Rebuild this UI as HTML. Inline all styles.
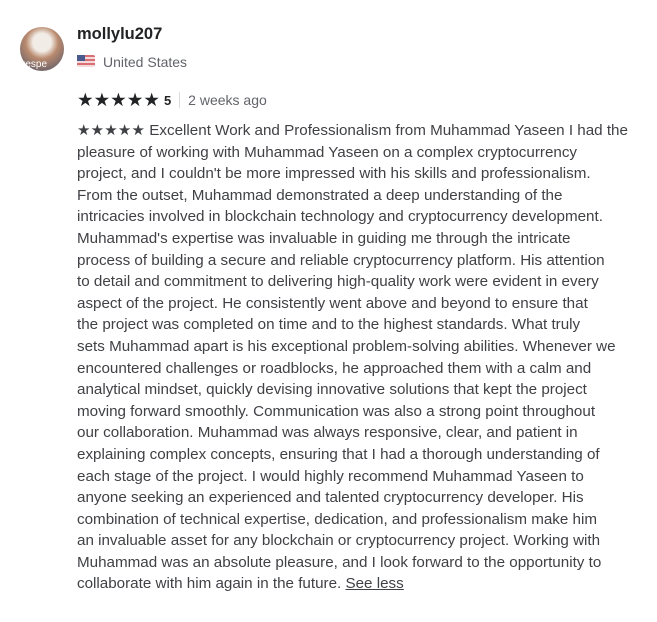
<!DOCTYPE html>
<html><head><meta charset="utf-8"><style>
body{margin:0;background:#fff;font-family:"Liberation Sans",sans-serif;color:#404145;width:657px;height:622px;overflow:hidden;position:relative}
.av{position:absolute;left:20px;top:27px;width:44px;height:44px;border-radius:50%;background:radial-gradient(circle at 50% 35%,#f2ece6 0 25%,#b98a6e 45%,#7b6a6a 75%,#555 100%);overflow:hidden}
.av span{position:absolute;left:2px;bottom:1px;color:#fff;font-size:10px}
.name{position:absolute;left:77px;top:25px;font-weight:bold;font-size:16.5px;color:#222325}
.flag{position:absolute;left:77px;top:55px;width:18px;height:12px;border-radius:2px;background:repeating-linear-gradient(#d96f72 0 2px,#f4dada 2px 4px)}
.flag:before{content:"";position:absolute;left:0;top:0;width:8px;height:6px;background:#4a5a8c}
.country{position:absolute;left:103px;top:54px;font-size:14px;color:#62646a}
.rate{position:absolute;left:77px;top:89px;font-size:15px;color:#222325;display:flex;align-items:center}
.rate .st{letter-spacing:0px;font-size:18.5px}
.rate b{font-size:13px;margin-left:4px}
.rate .sep{width:1px;height:16px;background:#dadbdd;margin:0 8px}
.rate .t{color:#62646a;font-size:14px}
.txt{position:absolute;left:77px;top:120px;font-size:15.2px;line-height:21.6px;white-space:nowrap}
.txt u{text-decoration:underline}
</style></head><body>
<div class="av"><span>respe</span></div>
<div class="name">mollylu207</div>
<div class="flag"></div>
<div class="country">United States</div>
<div class="rate"><span class="st">★★★★★</span><b>5</b><span class="sep"></span><span class="t">2 weeks ago</span></div>
<div class="txt">★★★★★ Excellent Work and Professionalism from Muhammad Yaseen I had the<br>
pleasure of working with Muhammad Yaseen on a complex cryptocurrency<br>
project, and I couldn't be more impressed with his skills and professionalism.<br>
From the outset, Muhammad demonstrated a deep understanding of the<br>
intricacies involved in blockchain technology and cryptocurrency development.<br>
Muhammad's expertise was invaluable in guiding me through the intricate<br>
process of building a secure and reliable cryptocurrency platform. His attention<br>
to detail and commitment to delivering high-quality work were evident in every<br>
aspect of the project. He consistently went above and beyond to ensure that<br>
the project was completed on time and to the highest standards. What truly<br>
sets Muhammad apart is his exceptional problem-solving abilities. Whenever we<br>
encountered challenges or roadblocks, he approached them with a calm and<br>
analytical mindset, quickly devising innovative solutions that kept the project<br>
moving forward smoothly. Communication was also a strong point throughout<br>
our collaboration. Muhammad was always responsive, clear, and patient in<br>
explaining complex concepts, ensuring that I had a thorough understanding of<br>
each stage of the project. I would highly recommend Muhammad Yaseen to<br>
anyone seeking an experienced and talented cryptocurrency developer. His<br>
combination of technical expertise, dedication, and professionalism make him<br>
an invaluable asset for any blockchain or cryptocurrency project. Working with<br>
Muhammad was an absolute pleasure, and I look forward to the opportunity to<br>
collaborate with him again in the future. <u>See less</u></div>
</body></html>
